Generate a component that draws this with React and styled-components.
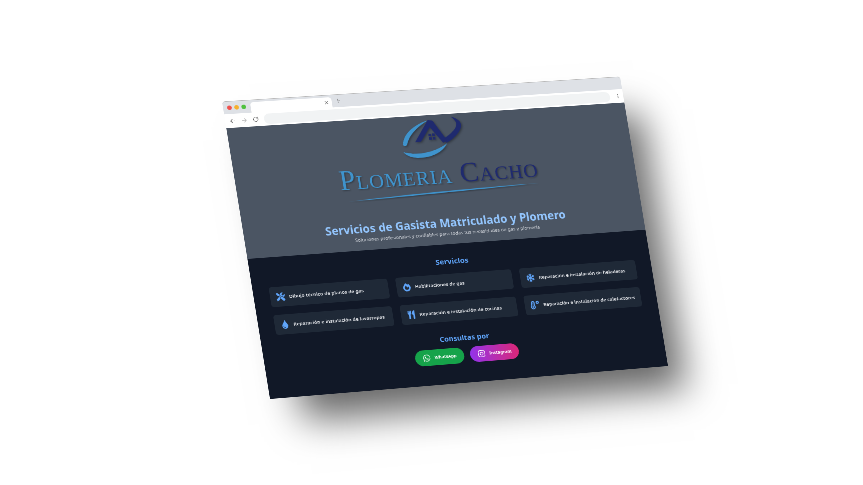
import React from 'react';
import styled, { createGlobalStyle } from 'styled-components';
import { FaTools, FaFireAlt, FaSnowflake, FaTint, FaUtensils, FaTemperatureHigh, FaWhatsapp, FaInstagram } from 'react-icons/fa';
import { ArrowLeft, ArrowRight, RotateCw, X, Plus, MoreVertical } from 'lucide-react';

const W = 800;
const H = 600;

// browser mockup corners on the page: top left, top right, bottom right, bottom left
function quadMatrix([[x0, y0], [x1, y1], [x2, y2], [x3, y3]]) {
  const dx1 = x1 - x2, dx2 = x3 - x2, sx = x0 - x1 + x2 - x3;
  const dy1 = y1 - y2, dy2 = y3 - y2, sy = y0 - y1 + y2 - y3;
  const den = dx1 * dy2 - dx2 * dy1;
  const g = (sx * dy2 - dx2 * sy) / den;
  const h = (dx1 * sy - sx * dy1) / den;
  const a = x1 - x0 + g * x1, b = x3 - x0 + h * x3;
  const d = y1 - y0 + g * y1, e = y3 - y0 + h * y3;
  return `matrix3d(${a / W},${d / W},0,${g / W},${b / H},${e / H},0,${h / H},0,0,1,0,${x0},${y0},0,1)`;
}
const tilt = quadMatrix([[222, 101.5], [620, 76.5], [668, 366], [270, 399]]);

const GlobalStyle = createGlobalStyle`
  html, body { margin: 0; background: #fff; }
  body { font-family: "Noto Sans", "Open Sans", sans-serif; }
`;

const Page = styled.div`
  width: 863px;
  height: 485px;
  overflow: hidden;
  background: #fff;
`;

const Mockup = styled.div`
  width: ${W}px;
  height: ${H}px;
  transform-origin: 0 0;
  transform: ${tilt};
  filter: blur(0.6px);
  display: flex;
  flex-direction: column;
  border-radius: 6px 6px 0 0;
  box-shadow: 44px 62px 72px -14px rgba(0, 0, 0, 0.6);
`;

const TabStrip = styled.div`
  height: 26px;
  flex: none;
  background: #dee1e6;
  border-top: 1px solid #b8b8b8;
  box-sizing: border-box;
  border-radius: 6px 6px 0 0;
  display: flex;
  align-items: flex-end;
  padding-left: 8px;
`;

const Lights = styled.div`
  display: flex;
  gap: 5px;
  width: 46px;
  align-self: center;
`;

const Light = styled.span`
  width: 9px;
  height: 9px;
  border-radius: 50%;
  background: ${p => p.$c};
`;

const Tab = styled.div`
  width: 160px;
  height: 21px;
  background: #fff;
  border-radius: 6px 6px 0 0;
  display: flex;
  align-items: center;
  justify-content: flex-end;
  padding-right: 5px;
  box-sizing: border-box;
  color: #555;
`;

const NewTab = styled.div`
  margin-left: 6px;
  align-self: center;
  display: flex;
  color: #666;
`;

const Toolbar = styled.div`
  height: 28px;
  flex: none;
  background: #fff;
  display: flex;
  align-items: center;
  padding: 0 5px 0 8px;
  gap: 10px;
  color: #555;
`;

const UrlBar = styled.div`
  flex: 1;
  height: 21px;
  background: #f1f3f4;
  border-radius: 11px;
`;

const Hero = styled.header`
  height: 264px;
  flex: none;
  background: #4b5563;
  display: flex;
  flex-direction: column;
  align-items: center;
  overflow: hidden;
`;

const Logo = styled.svg`
  width: 160px;
  height: 100px;
  margin: -7px 0 0 10px;
  flex: none;
  filter: drop-shadow(2px 2px 2px rgba(0, 0, 0, 0.35));
`;

const Brand = styled.div`
  font-family: "Liberation Serif", serif;
  font-variant: small-caps;
  font-size: 57px;
  line-height: 56px;
  margin-left: 6px;
  letter-spacing: 1.4px;
  white-space: nowrap;
  color: #3f93cc;
  text-shadow: 2px 2px 3px rgba(0, 0, 0, 0.3);
  span { color: #1f2a6e; }
`;

const Swoosh = styled.svg`
  width: 385px;
  height: 12px;
  flex: none;
  margin: 4px 0 0 16px;
  filter: drop-shadow(1px 2px 1px rgba(0, 0, 0, 0.3));
`;

const Title = styled.h1`
  margin: 40px 0 0 3px;
  font-size: 22.6px;
  line-height: 32px;
  font-weight: 700;
  color: #93c5fd;
  white-space: nowrap;
`;

const Tagline = styled.p`
  margin: -1px 0 0 3px;
  font-size: 9.5px;
  line-height: 14px;
  color: #d1d5db;
  white-space: nowrap;
`;

const Body = styled.main`
  flex: 1;
  background: #111827;
  display: flex;
  flex-direction: column;
  align-items: center;
  padding: 22px 32px 0;
`;

const SectionTitle = styled.h2`
  margin: ${p => p.$top || 0}px 0 0;
  font-size: ${p => p.$size}px;
  line-height: 24px;
  font-weight: 700;
  color: #60a5fa;
`;

const Grid = styled.div`
  display: grid;
  grid-template-columns: repeat(3, 1fr);
  gap: 16px;
  width: 100%;
  margin-top: 14px;
`;

const Card = styled.div`
  height: 40px;
  background: #1f2937;
  border-radius: 5px;
  display: flex;
  align-items: center;
  gap: 8px;
  padding: 0 12px;
  font-size: 9.6px;
  font-weight: 600;
  color: #e5e7eb;
  white-space: nowrap;
  svg { flex: none; color: #60a5fa; font-size: 17px; }
`;

const Buttons = styled.div`
  display: flex;
  gap: 12px;
  margin-top: 8px;
`;

const Contact = styled.div`
  height: 32px;
  border-radius: 16px;
  background: ${p => p.$bg};
  display: flex;
  align-items: center;
  gap: 8px;
  padding: 0 15px;
  font-size: 8.6px;
  font-weight: 700;
  color: #fff;
  svg { font-size: 16px; }
`;

const services = [
  [FaTools, 'Dibujo técnico de planos de gas'],
  [FaFireAlt, 'Habilitaciones de gas'],
  [FaSnowflake, 'Reparación e instalación de heladeras'],
  [FaTint, 'Reparación e instalación de lavarropas'],
  [FaUtensils, 'Reparación e instalación de cocinas'],
  [FaTemperatureHigh, 'Reparación e instalación de calefactores'],
];

export default function App() {
  return (
    <Page>
      <GlobalStyle />
      <Mockup>
        <TabStrip>
          <Lights>
            <Light $c="#f0524f" />
            <Light $c="#f5b02e" />
            <Light $c="#4fc13f" />
          </Lights>
          <Tab><X size={11} /></Tab>
          <NewTab><Plus size={13} /></NewTab>
        </TabStrip>
        <Toolbar>
          <ArrowLeft size={13} />
          <ArrowRight size={13} color="#aaa" />
          <RotateCw size={12} />
          <UrlBar />
          <MoreVertical size={12} />
        </Toolbar>
        <Hero>
          <Logo viewBox="0 0 240 150">
            <g transform="rotate(3.6 120 75)">
              <path d="M25 102 C28 70 62 40 106 27 C72 48 46 72 38 100 C36 106 28 108 25 102 Z" fill="#3f93cc" />
              <path d="M24 124 C58 134 110 130 157 98 C140 130 90 148 50 140 C38 137 30 132 24 124 Z" fill="#3f93cc" />
              <path d="M176 16 C200 22 210 36 202 52 C194 70 172 88 156 96 L146 84 C162 76 186 58 190 42 C192 32 186 24 176 16 Z" fill="#1f2a6e" />
              <path d="M62 94 L106 26 L120 28 L158 88 L146 96 L110 48 L80 92 Z" fill="#1f2a6e" />
              <path d="M104 68 h8 v8 h-8 z M115 67 h8 v8 h-8 z M105 79 h8 v8 h-8 z M116 78 h8 v8 h-8 z" fill="#1f2a6e" />
            </g>
          </Logo>
          <Brand>Plomeria <span>Cacho</span></Brand>
          <Swoosh viewBox="0 0 385 12">
            <path d="M0 11 C120 4 270 1 385 0 C270 4 120 9 0 11 Z" fill="#3f93cc" />
          </Swoosh>
          <Title>Servicios de Gasista Matriculado y Plomero</Title>
          <Tagline>Soluciones profesionales y confiables para todas tus necesidades de gas y plomería</Tagline>
        </Hero>
        <Body>
          <SectionTitle $size={15}>Servicios</SectionTitle>
          <Grid>
            {services.map(([Icon, label]) => (
              <Card key={label}><Icon />{label}</Card>
            ))}
          </Grid>
          <SectionTitle $size={14.5} $top={22}>Consultas por</SectionTitle>
          <Buttons>
            <Contact $bg="#16a34a"><FaWhatsapp />WhatsApp</Contact>
            <Contact $bg="linear-gradient(90deg, #9333ea, #db2777)"><FaInstagram />Instagram</Contact>
          </Buttons>
        </Body>
      </Mockup>
    </Page>
  );
}
